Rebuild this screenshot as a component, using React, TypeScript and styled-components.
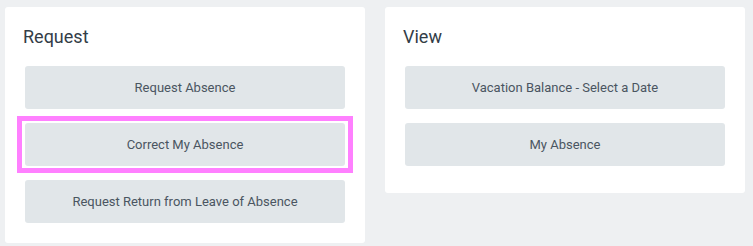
import React from "react";
import styled, { createGlobalStyle } from "styled-components";

const Global = createGlobalStyle`
  html, body {
    margin: 0;
    padding: 0;
    background: #eef0f2;
    font-family: Roboto, "Noto Sans", sans-serif;
  }
`;

const Page = styled.div`
  display: flex;
  align-items: flex-start;
  gap: 20px;
  padding: 7px 0 0 5px;
  height: 246px;
  box-sizing: border-box;
`;

const Card = styled.section<{ $bottom: number }>`
  width: 360px;
  box-sizing: border-box;
  background: #ffffff;
  border-radius: 3px;
  padding: 19px 20px ${(p) => p.$bottom}px 20px;
  display: flex;
  flex-direction: column;
`;

const Title = styled.h2`
  margin: 0 0 19px -2px;
  font-size: 18px;
  line-height: 21px;
  font-weight: 400;
  color: #333d47;
`;

const List = styled.div`
  display: flex;
  flex-direction: column;
  gap: 14px;
`;

const Button = styled.button`
  height: 43px;
  width: 100%;
  border: none;
  border-radius: 3px;
  background: #e1e6e9;
  color: #4a5561;
  font-family: Roboto, "Noto Sans", sans-serif;
  font-size: 13px;
  display: flex;
  align-items: center;
  justify-content: center;
  padding: 0;
  cursor: pointer;
`;

const Highlight = styled.div`
  margin: -7px -8px;
  padding: 2px 3px;
  border: 5px solid #ff80ff;
`;

export default function App() {
  return (
    <>
      <Global />
      <Page>
        <Card $bottom={20}>
          <Title>Request</Title>
          <List>
            <Button>Request Absence</Button>
            <Highlight>
              <Button>Correct My Absence</Button>
            </Highlight>
            <Button>Request Return from Leave of Absence</Button>
          </List>
        </Card>
        <Card $bottom={27}>
          <Title>View</Title>
          <List>
            <Button>Vacation Balance - Select a Date</Button>
            <Button>My Absence</Button>
          </List>
        </Card>
      </Page>
    </>
  );
}
